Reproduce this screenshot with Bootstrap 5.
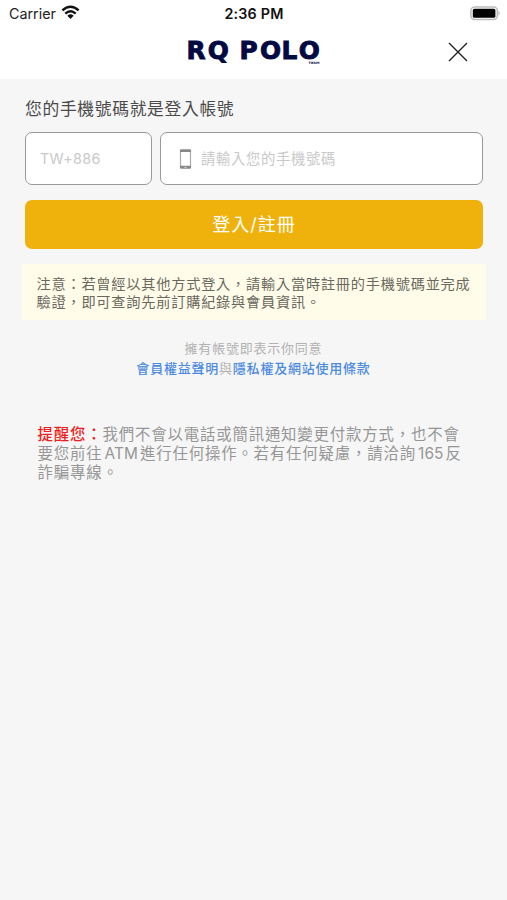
<!DOCTYPE html>
<html lang="zh-Hant-TW">
<head>
<meta charset="utf-8">
<meta name="viewport" content="width=device-width, initial-scale=1">
<title>RQ POLO</title>
<link href="https://cdn.jsdelivr.net/npm/bootstrap@5.3.0/dist/css/bootstrap.min.css" rel="stylesheet">
<style>
body{background:#f6f6f6;font-family:Inter,"Noto Sans CJK TC",sans-serif;min-height:100vh;color:#4a4a4a}
.topbar{height:79px}
.status{height:28px;font-size:14.3px;color:#222;padding:0 6px 0 9px;display:grid;grid-template-columns:1fr auto 1fr}
.clock{font-weight:600;color:#111;letter-spacing:.2px;margin-right:2px}
.brand-row{height:51px;display:grid;grid-template-columns:1fr auto 1fr;padding:0 38px}
.close-btn{width:22px;height:22px;line-height:0;margin-top:13px}
.login{padding:17px 24px 0 25px}
.login-title{font-size:16.8px;letter-spacing:.66px;line-height:27px;font-weight:400;margin:0 0 9px}
.field{height:53px;border:1.5px solid #999;border-radius:7px;font-size:14.3px;letter-spacing:.7px;color:#555;padding:0 14px;background:#fff}
.field input{font-size:inherit;letter-spacing:inherit;color:#555}
.field input::placeholder{color:#c9c9c9;opacity:1}
.code-field{width:127px;flex:none}
.code-field input{letter-spacing:.35px}
.phone-field{padding-left:17px}
.submit{height:49px;margin-top:15px;border-radius:7px;background:#efb20c;border:0;color:#fff;font-size:18px;letter-spacing:1px}
.submit:hover{background:#dfa506;color:#fff}
.notice{margin:15px 21px 0 22px;height:56px;padding:11px 0 0 14.5px;background:#fffce9;color:#6a685e;font-size:14.2px;letter-spacing:.78px;line-height:17.5px}
.terms{margin-top:19px;font-size:13px;letter-spacing:.78px;line-height:19.5px;color:#b2b2b2}
.terms a{color:#4b8ae0;font-weight:500;text-decoration:none}
.reminder{margin:47px 0 0 37.5px;font-size:15.4px;letter-spacing:.85px;line-height:19px;color:#969696}
.reminder strong{color:#f01d20;font-weight:500}
.latin{letter-spacing:.1px;margin:0 2px}
</style>
<script src="https://cdn.jsdelivr.net/npm/bootstrap@5.3.0/dist/js/bootstrap.bundle.min.js"></script>
</head>
<body>
<header class="topbar bg-white">
  <div class="status align-items-center text-nowrap">
    <div class="d-flex align-items-center">
      <span>Carrier</span>
      <svg class="ms-1 mb-1" width="21" height="15" viewBox="0 0 20 15" fill="none" stroke="#111" stroke-width="2.4" aria-hidden="true"><path d="M1.9 5.4Q10-1.9 18.1 5.4M4.8 8.7Q10 4 15.2 8.7"/><path d="M6.9 10.7Q10 8 13.1 10.7L10 14Z" fill="#111" stroke="none"/></svg>
    </div>
    <span class="clock">2:36 PM</span>
    <svg class="ms-auto" width="31" height="16" viewBox="0 0 31 16" aria-hidden="true"><rect x=".9" y="1" width="26.4" height="12.6" rx="3.8" fill="#fff" stroke="#bcbcbc" stroke-width="1.5"/><rect x="2.8" y="2.8" width="22.6" height="9" rx="1.6" fill="#000"/><path d="M28.5 5.1q2.4 2.2 0 4.4z" fill="#aaa"/></svg>
  </div>
  <div class="brand-row">
    <span></span>
    <svg width="136" height="42" viewBox="186 28 136 42" role="img" aria-label="RQ POLO">
      <g fill="#020a42" font-family="DejaVu Sans" font-weight="700">
        <text transform="translate(0 58.6)" font-size="24.8" stroke="#020a42" stroke-width=".9"><tspan x="186.5">R</tspan><tspan x="207.8">Q</tspan><tspan x="239.4">P</tspan><tspan x="260">O</tspan><tspan x="281.6">L</tspan><tspan x="298.7">O</tspan></text>
        <text x="308.5" y="64.4" font-size="3.2" textLength="11" lengthAdjust="spacingAndGlyphs">TEAM</text>
      </g>
    </svg>
    <button class="close-btn btn p-0 border-0 ms-auto" type="button" aria-label="關閉"><svg width="22" height="22" viewBox="0 0 22 22" stroke="#222" stroke-width="1.4"><path d="M2 2L20 20M20 2L2 20"/></svg></button>
  </div>
</header>
<main>
  <form class="login">
    <h1 class="login-title">您的手機號碼就是登入帳號</h1>
    <div class="d-flex gap-2">
      <div class="field code-field d-flex align-items-center"><input class="form-control border-0 p-0 bg-transparent shadow-none" placeholder="TW+886" aria-label="國碼"></div>
      <div class="field phone-field d-flex align-items-center flex-grow-1">
        <svg class="flex-shrink-0 me-2" width="15" height="22" viewBox="0 0 14 22" aria-hidden="true"><path d="M2 4v14M12 4v14" stroke="#aaa" stroke-width="1.2"/><path d="M1.4 4V2.5Q1.4 1.2 2.7 1.2h8.6q1.3 0 1.3 1.3V4zM1.4 17.8h11.2v1.7q0 1.3-1.3 1.3H2.7q-1.3 0-1.3-1.3z" fill="#888"/><path d="M6 19.3h2" stroke="#ddd"/></svg>
        <input class="form-control border-0 p-0 bg-transparent shadow-none" type="tel" placeholder="請輸入您的手機號碼" aria-label="手機號碼">
      </div>
    </div>
    <button class="submit btn w-100 p-0 d-block" type="button">登入/註冊</button>
  </form>
  <p class="notice text-nowrap">注意：若曾經以其他方式登入，請輸入當時註冊的手機號碼並完成<br>驗證，即可查詢先前訂購紀錄與會員資訊。</p>
  <p class="terms text-center mb-0">擁有帳號即表示你同意<br><a href="#">會員權益聲明</a>與<a href="#">隱私權及網站使用條款</a></p>
  <p class="reminder text-nowrap"><strong>提醒您：</strong>我們不會以電話或簡訊通知變更付款方式，也不會<br>要您前往<span class="latin">ATM</span>進行任何操作。若有任何疑慮，請洽詢<span class="latin">165</span>反<br>詐騙專線。</p>
</main>
</body>
</html>
